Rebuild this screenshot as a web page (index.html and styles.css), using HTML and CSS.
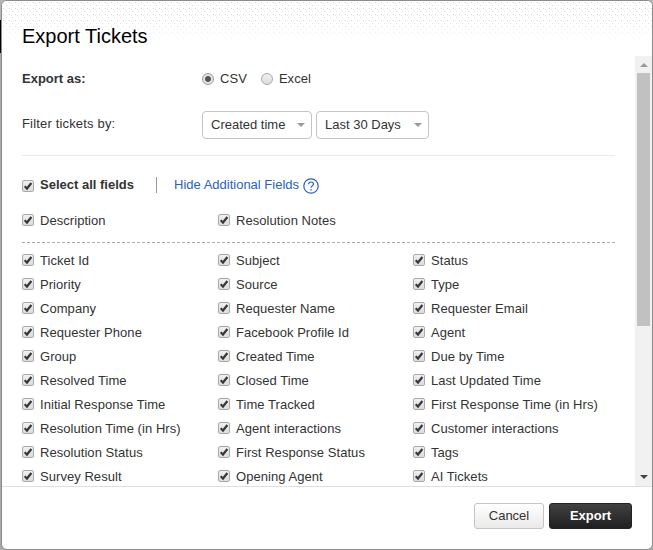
FILE: index.html
```html
<!DOCTYPE html>
<html lang="en">
<head>
    <meta charset="UTF-8">
    <meta name="viewport" content="width=device-width, initial-scale=1.0">
    <title>Export Tickets</title>
    <link rel="stylesheet" href="styles.css">
</head>
<body>
    <div class="modal">
        <div class="modal-header">
            <h1>Export Tickets</h1>
        </div>
        <div class="modal-body">
            <form class="content" id="exportForm">
                <div class="row format-row">
                    <span class="row-label bold">Export as:</span>
                    <label class="radio"><input type="radio" name="format" checked>CSV</label>
                    <label class="radio"><input type="radio" name="format">Excel</label>
                </div>
                <div class="row filter-row">
                    <span class="row-label">Filter tickets by:</span>
                    <button type="button" class="dropdown created">Created time</button>
                    <button type="button" class="dropdown days">Last 30 Days</button>
                </div>
                <div class="row select-row">
                    <label class="check bold"><input type="checkbox" checked>Select all fields</label>
                    <a class="toggle">Hide Additional Fields</a>
                    <svg class="help" width="16" height="16" viewBox="0 0 16 16" fill="none" stroke="#2a62bd" stroke-width="1.2">
                        <circle cx="8" cy="8" r="7.2"/>
                        <path d="M5.6 6.3C5.6 3.2 10.5 3.3 10.5 6.1C10.5 7.9 8 7.7 8 9.8M8 11V12.4"/>
                    </svg>
                </div>
                <div class="fields extra">
                    <label class="check"><input type="checkbox" checked>Description</label>
                    <label class="check"><input type="checkbox" checked>Resolution Notes</label>
                </div>
                <div class="fields">
                    <label class="check"><input type="checkbox" checked>Ticket Id</label>
                    <label class="check"><input type="checkbox" checked>Subject</label>
                    <label class="check"><input type="checkbox" checked>Status</label>
                    <label class="check"><input type="checkbox" checked>Priority</label>
                    <label class="check"><input type="checkbox" checked>Source</label>
                    <label class="check"><input type="checkbox" checked>Type</label>
                    <label class="check"><input type="checkbox" checked>Company</label>
                    <label class="check"><input type="checkbox" checked>Requester Name</label>
                    <label class="check"><input type="checkbox" checked>Requester Email</label>
                    <label class="check"><input type="checkbox" checked>Requester Phone</label>
                    <label class="check"><input type="checkbox" checked>Facebook Profile Id</label>
                    <label class="check"><input type="checkbox" checked>Agent</label>
                    <label class="check"><input type="checkbox" checked>Group</label>
                    <label class="check"><input type="checkbox" checked>Created Time</label>
                    <label class="check"><input type="checkbox" checked>Due by Time</label>
                    <label class="check"><input type="checkbox" checked>Resolved Time</label>
                    <label class="check"><input type="checkbox" checked>Closed Time</label>
                    <label class="check"><input type="checkbox" checked>Last Updated Time</label>
                    <label class="check"><input type="checkbox" checked>Initial Response Time</label>
                    <label class="check"><input type="checkbox" checked>Time Tracked</label>
                    <label class="check"><input type="checkbox" checked>First Response Time (in Hrs)</label>
                    <label class="check"><input type="checkbox" checked>Resolution Time (in Hrs)</label>
                    <label class="check"><input type="checkbox" checked>Agent interactions</label>
                    <label class="check"><input type="checkbox" checked>Customer interactions</label>
                    <label class="check"><input type="checkbox" checked>Resolution Status</label>
                    <label class="check"><input type="checkbox" checked>First Response Status</label>
                    <label class="check"><input type="checkbox" checked>Tags</label>
                    <label class="check"><input type="checkbox" checked>Survey Result</label>
                    <label class="check"><input type="checkbox" checked>Opening Agent</label>
                    <label class="check"><input type="checkbox" checked>AI Tickets</label>
                </div>
            </form>
            <div class="scrollbar">
                <span class="arrow up"></span>
                <span class="thumb"></span>
                <span class="arrow down"></span>
            </div>
        </div>
        <div class="modal-footer">
            <button type="button" class="btn">Cancel</button>
            <button type="submit" form="exportForm" class="btn primary">Export</button>
        </div>
    </div>
</body>
</html>
```
FILE: styles.css
```css
* {
    box-sizing: border-box;
}
body {
    margin: 0;
    height: 550px;
    padding: 0 0 0 1px;
    overflow: hidden;
    font-family: "Liberation Sans", Arial, sans-serif;
    font-size: 13px;
    line-height: 16px;
    color: #333;
    background: linear-gradient(#b5b5b5 20px, #000 20px, #000 53px, #a9a9a9 53px);
}
.modal {
    display: flex;
    flex-direction: column;
    height: 550px;
    border: 1px solid #8c8c8c;
    border-radius: 6px;
    background: #fff;
    overflow: hidden;
}
.modal-header {
    flex: none;
    height: 55px;
    padding: 23px 20px 0;
    background:
        linear-gradient(rgba(255, 255, 255, 0), rgba(255, 255, 255, 0.2) 22px, #fff 40px),
        radial-gradient(circle at 1.5px 1.5px, #cfcfcf 0.6px, transparent 0.9px) 0 0 / 6px 6px,
        radial-gradient(circle at 1.5px 1.5px, #dadada 0.6px, transparent 0.9px) 3px 3px / 6px 6px,
        radial-gradient(circle at 1.5px 1.5px, #e6e6e6 0.6px, transparent 0.9px) 2px 1px / 6px 6px,
        #fff;
}
h1 {
    margin: 0;
    font-size: 20px;
    line-height: 24px;
    font-weight: normal;
    color: #000;
}
.modal-body {
    display: flex;
    flex: none;
    height: 430px;
    overflow: hidden;
}
.content {
    flex: 1;
    padding: 0 20px;
    letter-spacing: 0.05px;
}
.row {
    display: flex;
    align-items: center;
}
.row-label {
    width: 180px;
}
.bold {
    font-weight: bold;
    letter-spacing: 0;
}
.format-row {
    height: 44px;
    padding-top: 1px;
}
.radio {
    display: flex;
    align-items: center;
    margin-right: 14px;
}
input {
    appearance: none;
    flex: none;
    width: 12px;
    height: 12px;
    margin: 0 6px 0 0;
    border: 1px solid #aaa;
    background: linear-gradient(#f0f0f0, #dcdcdc);
}
input[type="radio"] {
    border-radius: 50%;
}
input[type="radio"]:checked {
    border-color: #999;
    background: radial-gradient(circle, #555 2.5px, #e5e5e5 3.5px);
}
input[type="checkbox"] {
    border-radius: 2px;
    background:
        url("data:image/svg+xml,%3Csvg xmlns='http://www.w3.org/2000/svg' viewBox='0 0 10 10'%3E%3Cpath d='M1.7 5.2L4 7.5L8.4 2' fill='none' stroke='%23383838' stroke-width='2.2'/%3E%3C/svg%3E") center / 10px 10px no-repeat,
        linear-gradient(#f0f0f0, #dcdcdc);
}
.filter-row {
    height: 56px;
    padding-bottom: 5px;
    border-bottom: 1px solid #ebebeb;
    align-items: flex-start;
    padding-top: 11px;
}
.filter-row .row-label {
    padding-top: 5px;
    letter-spacing: 0.17px;
}
.dropdown {
    display: flex;
    align-items: center;
    justify-content: space-between;
    height: 28px;
    margin: 0 4px 0 0;
    padding: 0 6px 0 8px;
    border: 1px solid #c4c4c4;
    border-radius: 4px;
    background: #fff;
    font: inherit;
    color: #333;
}
.dropdown::after {
    content: "";
    border: 4px solid transparent;
    border-top-color: #999;
    border-bottom: 0;
}
.created {
    width: 110px;
}
.days {
    width: 113px;
}
.select-row {
    height: 46px;
    padding-top: 12px;
}
.select-row .check {
    width: 135px;
    border-right: 1px solid #999;
}
.select-row input {
    margin-top: 2px;
}
.toggle {
    margin-left: 17px;
    color: #2a62bd;
    letter-spacing: 0;
}
.help {
    margin: 2px 0 0 4px;
}
.check {
    display: flex;
    align-items: center;
    white-space: nowrap;
}
.fields {
    display: grid;
    grid-template-columns: 196px 195px 1fr;
    grid-auto-rows: 24px;
    padding-top: 6px;
}
.fields input {
    margin-bottom: 2px;
}
.extra {
    height: 41px;
    padding-top: 7px;
    border-bottom: 1px dashed #aaa;
}
.scrollbar {
    display: flex;
    flex-direction: column;
    align-items: center;
    width: 17px;
    background: #f1f1f1;
}
.arrow {
    border: 4px solid transparent;
}
.up {
    margin: 7px 0 6px;
    border-top: 0;
    border-bottom-color: #999;
}
.thumb {
    width: 13px;
    height: 253px;
    background: #c1c1c1;
}
.down {
    margin: auto 0 7px;
    border-bottom: 0;
    border-top-color: #444;
}
.modal-footer {
    display: flex;
    flex: 1;
    justify-content: flex-end;
    align-items: flex-start;
    gap: 5px;
    padding: 16px 20px 0;
    border-top: 1px solid #dfdfdf;
}
.btn {
    width: 70px;
    height: 26px;
    padding: 0;
    border: 1px solid #c4c4c4;
    border-radius: 3px;
    background: linear-gradient(#fff, #eaeaea);
    font: inherit;
    color: #333;
}
.primary {
    width: 83px;
    border-color: #222;
    background: linear-gradient(#414141, #202020);
    font-weight: bold;
    color: #fff;
}
```
